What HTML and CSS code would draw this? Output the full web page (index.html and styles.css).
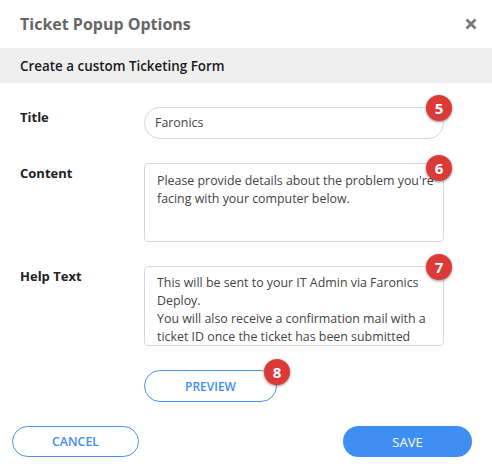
FILE: index.html
```html
<!DOCTYPE html>
<html>
<head>
<meta charset="utf-8">
<link rel="stylesheet" href="styles.css">
</head>
<body>
<div class="dialog">
  <div class="header">
    <div class="title">Ticket Popup Options</div>
    <svg class="close" width="12" height="12" viewBox="0 0 12 12"><path d="M1.5 1.5 L10.5 10.5 M10.5 1.5 L1.5 10.5" stroke="#777" stroke-width="2.6" stroke-linecap="butt"/></svg>
  </div>
  <div class="band">Create a custom Ticketing Form</div>
  <div class="form">
    <div class="row">
      <div class="label">Title</div>
      <div class="field">
        <div class="input">Faronics</div>
        <span class="badge b5">5</span>
      </div>
    </div>
    <div class="row">
      <div class="label">Content</div>
      <div class="field">
        <div class="area area-content">Please provide details about the problem you're facing with your computer below.</div>
        <span class="badge b6">6</span>
      </div>
    </div>
    <div class="row">
      <div class="label">Help Text</div>
      <div class="field">
        <div class="area area-help">This will be sent to your IT Admin via Faronics Deploy.<br>You will also receive a confirmation mail with a ticket ID once the ticket has been submitted</div>
        <span class="badge b7">7</span>
      </div>
    </div>
    <div class="row">
      <div class="label"></div>
      <div class="field preview-wrap">
        <button class="btn btn-outline preview">PREVIEW</button>
        <span class="badge b8">8</span>
      </div>
    </div>
  </div>
  <div class="footer">
    <button class="btn btn-outline cancel">CANCEL</button>
    <button class="btn btn-fill save">SAVE</button>
  </div>
</div>
</body>
</html>
```
FILE: styles.css
```css
* { box-sizing: border-box; }
html, body { margin: 0; padding: 0; background: #fff; }
body { font-family: "Open Sans", "Noto Sans", sans-serif; width: 492px; height: 475px; overflow: hidden; }
.dialog { width: 492px; }
.header { height: 48px; display: flex; align-items: center; justify-content: space-between; padding: 0 15px 0 20px; }
.title { font-size: 16px; font-weight: 700; color: #666; margin-top: -1px; }
.close { display: block; margin-top: -1px; }
.band { height: 35px; background: #efefef; display: flex; align-items: center; padding-left: 20px; font-size: 13.4px; font-weight: 600; color: #1a1a1a; }
.form { padding: 24px 0 0 0; display: flex; flex-direction: column; gap: 24px; }
.row { display: flex; }
.label { width: 144px; padding-left: 20px; font-size: 13px; font-weight: 700; color: #222; line-height: 20px; }
.field { position: relative; width: 300px; }
.input { height: 32px; border: 1px solid #d4d7db; border-radius: 16px; padding-left: 10px; font-size: 12.4px; color: #444; line-height: 30px; }
.area { border: 1px solid #d4d7db; border-radius: 4px; font-size: 12.4px; color: #444; line-height: 18px; overflow: hidden; padding: 8px 2px 0 12px; }
.area-content { height: 79px; }
.area-help { height: 80px; padding-top: 7px; padding-right: 14px; }
.badge { position: absolute; width: 26px; height: 26px; border-radius: 50%; background: #dc3a37; color: #fff; font-weight: 700; font-size: 15px; line-height: 26px; text-align: center; box-shadow: 0 1px 3px rgba(0,0,0,0.45); }
.b5 { left: 282px; top: -12px; }
.b6 { left: 282px; top: -8px; }
.b7 { left: 282px; top: -12px; }
.b8 { left: 120px; top: -11px; }
.btn { font-family: "Open Sans", "Noto Sans", sans-serif; border-radius: 17px; font-size: 12px; font-weight: 600; cursor: pointer; padding: 0; }
.btn-outline { background: #fff; border: 1.5px solid #4b93ec; color: #3f8ef0; }
.preview { width: 133px; height: 32px; display: block; }
.footer { display: flex; justify-content: space-between; padding: 24px 20px 0 12px; }
.cancel { width: 127px; height: 31px; font-size: 12.3px; }
.btn-fill { background: #3f8ff2; border: none; color: #fff; }
.save { width: 129px; height: 31px; font-size: 13px; font-weight: 500; }
```
